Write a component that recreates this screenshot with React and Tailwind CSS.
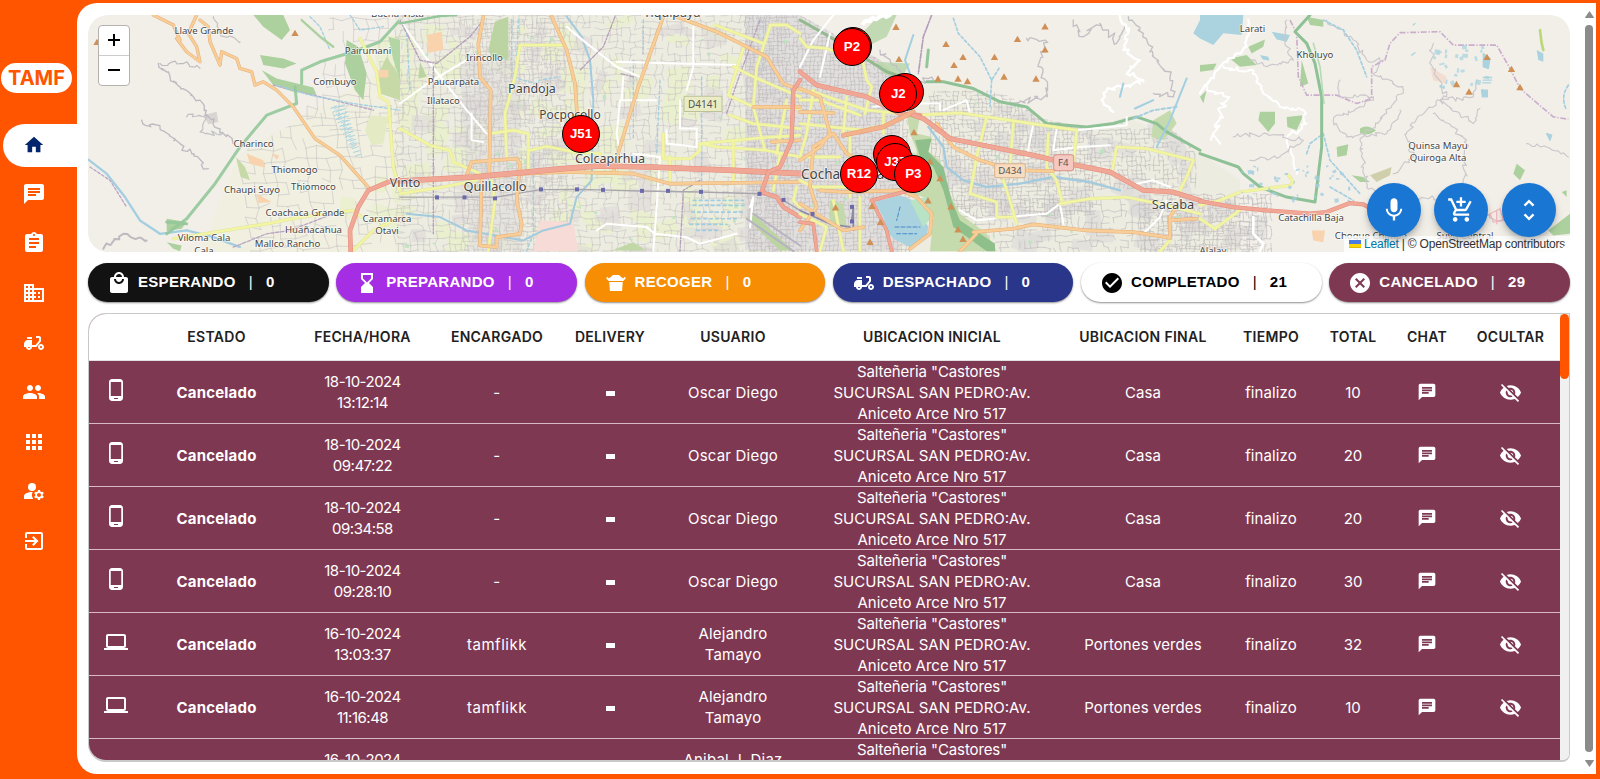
import {
  MdHome, MdChat, MdAssignment, MdBusiness, MdMoped, MdPeople, MdApps, MdManageAccounts,
  MdExitToApp, MdPhoneAndroid, MdComputer, MdLocalMall, MdHourglassBottom, MdTakeoutDining,
  MdCheckCircle, MdCancel, MdMic, MdAddShoppingCart, MdUnfoldMore, MdVisibilityOff,
} from "react-icons/md";

/* ---------- map drawing ---------- */

function rng(seed) {
  let s = seed;
  return () => {
    s = (s * 1664525 + 1013904223) % 4294967296;
    return s / 4294967296;
  };
}

// Jittered street mesh covering a rectangle, with some segments left out.
function mesh(x0, y0, x1, y1, step, keep, tilt, seed) {
  const r = rng(seed);
  const cols = Math.ceil((x1 - x0) / step);
  const rows = Math.ceil((y1 - y0) / step);
  const pts = [];
  for (let j = 0; j <= rows; j++) {
    const line = [];
    for (let i = 0; i <= cols; i++) {
      const jx = (r() - 0.5) * step * 0.5;
      const jy = (r() - 0.5) * step * 0.4;
      line.push([x0 + i * step + jx + tilt * j * step, y0 + j * step + jy - tilt * i * step * 0.4]);
    }
    pts.push(line);
  }
  let d = "";
  const seg = (a, b) => {
    d += `M${a[0].toFixed(1)} ${a[1].toFixed(1)}L${b[0].toFixed(1)} ${b[1].toFixed(1)}`;
  };
  for (let j = 0; j <= rows; j++)
    for (let i = 0; i <= cols; i++) {
      if (i < cols && r() < keep) seg(pts[j][i], pts[j][i + 1]);
      if (j < rows && r() < keep) seg(pts[j][i], pts[j + 1][i]);
    }
  return d;
}

function blobs(x0, y0, x1, y1, n, size, seed) {
  const r = rng(seed);
  return Array.from({ length: n }, () => ({
    x: x0 + r() * (x1 - x0),
    y: y0 + r() * (y1 - y0),
    w: size * (0.4 + r()),
    h: size * (0.4 + r()),
    a: r() * 50 - 25,
  }));
}

// Wandering thin line through the given anchor points.
function wiggle(points, amp, seed) {
  const r = rng(seed);
  let d = `M${points[0][0]} ${points[0][1]}`;
  for (let k = 1; k < points.length; k++) {
    const [ax, ay] = points[k - 1];
    const [bx, by] = points[k];
    const n = Math.max(2, Math.round(Math.hypot(bx - ax, by - ay) / 9));
    for (let i = 1; i <= n; i++) {
      const t = i / n;
      const q = i === n ? 0 : amp * 0.75;
      d += `L${(ax + (bx - ax) * t + (r() - 0.5) * q).toFixed(1)} ${(ay + (by - ay) * t + (r() - 0.5) * q).toFixed(1)}`;
    }
  }
  return d;
}

const VALLEY = "M330 15L400 15L800 15L880 60L905 85L960 84L1010 96L1040 118L1090 128L1130 116L1165 124L1200 152L1240 172L1290 200L1340 204L1370 215L1375 252L170 252L205 215L225 180L245 150L290 125L320 90Z";

const streets = [
  mesh(235, 118, 400, 270, 11, 0.62, 0.12, 3),
  mesh(300, 20, 400, 130, 11, 0.5, 0.05, 5),
];
const denseStreets = [
  mesh(395, 10, 780, 260, 6.5, 0.66, 0.01, 7),
  mesh(460, 20, 560, 260, 4.5, 0.6, 0.02, 17),
];
const cityStreets = [
  mesh(745, 10, 905, 255, 4, 0.78, 0.02, 11),
  mesh(930, 92, 1090, 215, 4, 0.72, 0.03, 13),
  mesh(1090, 130, 1190, 185, 4.5, 0.6, 0.04, 23),
  mesh(940, 200, 1260, 258, 6, 0.5, 0.02, 19),
  mesh(1140, 195, 1270, 255, 4.5, 0.7, 0.02, 29),
];

const fields = blobs(340, 20, 770, 250, 110, 20, 31);
const houses = blobs(400, 20, 900, 250, 80, 18, 41);
const eastHouses = blobs(935, 95, 1250, 245, 70, 20, 43);
const parks = blobs(400, 20, 1180, 245, 70, 3.5, 47);
const wet = blobs(1430, 45, 1490, 95, 26, 4, 53);
const rills = blobs(1240, 165, 1350, 200, 42, 3, 59);

const PEAKS = [
  [97, 42], [295, 33], [896, 27], [899, 59], [946, 44], [954, 65], [963, 57], [938, 78.5], [958, 78.5], [967.5, 81],
  [994.5, 57], [1004, 76.5], [1017.5, 39], [1045, 26.5], [1045, 49.5], [1036, 78.5], [914, 132], [930, 161], [940, 178], [928, 200],
  [951, 206], [958, 229], [963, 238.5], [872, 205.5], [880.5, 221.5], [835.5, 207], [870, 241.5], [1456.5, 84], [1469, 91.5],
  [1487, 57], [1511.5, 69], [1520, 87],
];

const STATIONS = [[437, 197], [464.5, 197], [495, 198], [541, 189], [577, 189], [603, 189.5], [642, 190.5], [668, 190.5], [701, 191.5], [759.5, 193.5], [783.5, 199.5], [812.5, 213.5], [852, 206.5], [852, 221]];

const PLACES = [
  ["Llave Grande", 204, 33.5, 9.6], ["Pairumani", 368, 53.5, 9.6], ["Combuyo", 335, 85, 9.6], ["Charinco", 253.5, 146.5, 9.6],
  ["Thiomogo", 294.5, 172.5, 9.6], ["Thiomoco", 313.5, 189.5, 9.6], ["Chaupi Suyo", 252, 193, 9.6], ["Coachaca Grande", 305, 216, 9.6],
  ["Huañacahua", 313.5, 233, 9.6], ["Mallco Rancho", 287.5, 247, 9.6], ["Viloma Cala", 204, 241, 9.6], ["Cala", 204, 253, 9.6],
  ["Bucha", 385, 17, 9.6], ["Caramarca", 387, 221.5, 9.6], ["Otavi", 387, 234, 9.6], ["Vinto", 405, 187, 12.5], ["Irincollo", 484.5, 61, 9.6],
  ["Paucarpata", 453.5, 85, 9.6], ["Illataco", 443.5, 103.5, 9.6], ["Vista", 413, 17, 9.6], ["Pandoja", 532, 93, 12.5], ["Pocpocollo", 570, 119, 12],
  ["Colcapirhua", 610, 163, 12.5], ["Quillacollo", 495, 191, 12.8], ["Tiquipaya", 672, 16.5, 12.5], ["Sacaba", 1173, 208.5, 12.8],
  ["Larati", 1252.5, 31.5, 9.6], ["Kholuyo", 1315, 57.5, 9.6], ["Quinsa Mayu", 1438, 148.5, 9.6], ["Quiroga Alta", 1438, 161, 9.6],
  ["Catachilla Baja", 1311, 221, 9.6], ["Choque Chimpa", 1371, 239, 9.6], ["Suyu Central", 1465, 239, 9.6], ["Alalay", 1213, 253, 9.6],
];

function Blobs({ items, fill, opacity }) {
  return items.map((b, i) => (
    <rect key={i} x={b.x} y={b.y} width={b.w} height={b.h} fill={fill} opacity={opacity} transform={`rotate(${b.a} ${b.x} ${b.y})`} />
  ));
}

// A road with a darker casing; coordinates are in thirds of a pixel.
function Road({ d, c, e, w }) {
  return (
    <>
      <path d={d} stroke={e} strokeWidth={w + 3} />
      <path d={d} stroke={c} strokeWidth={w} />
    </>
  );
}
const Yellow = ({ d, w = 7 }) => <Road d={d} c="#f2f5a2" e="#e3e4a0" w={w} />;
const Orange = ({ d, w = 8 }) => <Road d={d} c="#f8cd97" e="#e6b078" w={w} />;
const Red = ({ d, w = 14 }) => <Road d={d} c="#f0a795" e="#e68c7c" w={w} />;

function Map() {
  return (
    <svg viewBox="88 15 1482 236" preserveAspectRatio="none" className="block size-full" fill="none" strokeLinejoin="round" strokeLinecap="round">
      <rect x="88" y="15" width="1482" height="237" fill="#f2efe9" />
      <clipPath id="valley"><path d={VALLEY} /></clipPath>
      <g clipPath="url(#valley)">
        <path d="M395 15H790L905 85L960 84L1040 118L1130 118L1200 152L1240 180L1240 252H395Z" fill="#edece1" />
        <path d="M240 150L330 100L400 60V252H200Z" fill="#eff0dc" opacity="0.7" />
        <Blobs items={fields} fill="#e9f0cc" opacity={0.85} />
        <path d="M745 15H900V250H745Z" fill="#e1dfdd" />
        <path d="M460 60H520V250H470Z" fill="#e1dfdc" opacity="0.7" />
        <Blobs items={houses} fill="#dddbd9" opacity={0.6} />
        <Blobs items={eastHouses} fill="#dcdad8" opacity={0.6} />
        <path d={streets.join("")} stroke="#cac6c6" strokeWidth="0.65" />
        <path d={denseStreets.join("")} stroke="#c9c5c5" strokeWidth="0.6" />
        <path d={cityStreets.join("")} stroke="#c2bebe" strokeWidth="0.65" />
        <Blobs items={parks} fill="#b7e3bd" opacity={0.8} />
      </g>

      <g transform="scale(0.33333)">
        <path d="M760 45H850L870 90L845 120L790 80ZM780 165L850 175L890 190L850 205L790 195ZM1040 120L1075 140L1100 220L1090 300L1065 270L1035 190ZM785 210L830 235L940 262L950 285L880 275L820 255ZM500 655L560 665L545 685L500 692ZM500 725L545 735L540 752L520 745Z" fill="#add19e" />
        <path d="M708 470L735 500L750 540L722 530ZM1130 230L1160 170L1200 230V300L1140 280Z" fill="#c8d9a8" />
        <path d="M1165 110L1180 180L1200 240V120Z" fill="#b3d6a4" />
        <path d="M740 460L790 480L795 502L750 490ZM815 460L838 466L830 478ZM770 580L815 605L775 608ZM1135 210H1165V232H1135Z" fill="#f8d3ae" />
        <path d="M1110 345L1165 350L1150 430L1115 435L1095 390Z" fill="#e4ebc4" />
        <path d="M1010 320L1050 400M1000 320L1060 440M1025 315L1075 470" stroke="#a9d5e4" strokeWidth="20" strokeDasharray="3 9" strokeLinecap="butt" />
        <path d="M610 345L650 335L655 365L625 372Z" fill="#d8d5d3" />
        <path d={wiggle([[475, 190], [540, 260], [600, 300], [615, 345], [660, 385], [700, 430]], 22, 61)} stroke="#bdbbc0" strokeWidth="4" />
        <path d={wiggle([[425, 360], [480, 385], [540, 430], [625, 505]], 24, 62)} stroke="#bdbbc0" strokeWidth="4" />
        <path d={wiggle([[480, 190], [560, 185], [600, 205]], 18, 63)} stroke="#bdbbc0" strokeWidth="3.5" />
        <path d={wiggle([[560, 350], [620, 350], [600, 395], [670, 400]], 24, 64)} stroke="#c2c0c4" strokeWidth="3.5" />
        <path d={wiggle([[640, 50], [660, 100], [720, 125]], 20, 65)} stroke="#c2c0c4" strokeWidth="3.5" />
        <path d={wiggle([[310, 745], [370, 700], [440, 720]], 16, 66)} stroke="#bdbbc0" strokeWidth="6" />
        <path d="M265 478L320 520L375 590L420 660L480 700L560 690L640 710L720 740" stroke="#a3cfe0" strokeWidth="7" />
        <path d="M270 500L330 540L380 620M820 255L900 275L1000 300L1120 330" stroke="#b9a6c4" strokeWidth="4" strokeDasharray="8 6" />
        <path d="M830 255L930 285L1060 310L1200 330M930 50L960 80L990 150M1050 45L1080 90L1150 80" stroke="#a3cfe0" strokeWidth="4" strokeDasharray="9 6" />
        <path d="M500 700L560 655L645 550L720 440L800 345L890 310L885 260M905 250V210L960 185L1060 155L1140 125L1200 60M500 665L560 670" stroke="#93c69a" strokeWidth="9" opacity="0.9" />
        <path d="M905 60L960 110L1000 140" stroke="#add19e" strokeWidth="7" />
        <Orange d="M460 45L520 75L540 120L530 115L560 155L600 185L590 140L565 100L590 45M600 60L625 80L630 125L660 195L665 155L710 175L720 205L755 215L765 255L790 245L830 270L880 320L945 415L1020 465L1105 560" w={7} />
        <Yellow d="M1080 115L1130 215L1140 290L1165 305L1180 500L1200 570M520 715L800 670L900 650L1060 630L1085 650M1060 750L1120 690L1200 650" />
        <Red d="M1052 752L1050 690L1075 620L1105 570L1165 545L1200 540" w={11} />
        <path d="M700 740L800 700L870 690L1000 640" stroke="#b9a6c4" strokeWidth="4" strokeDasharray="10 5" />
      </g>

      <g transform="translate(400 0) scale(0.33333)">
        <path d="M285 65L325 50V180L275 170L265 150ZM60 185L80 230L55 235ZM1040 655L1060 640L1180 750H1140Z" fill="#bcd3a2" />
        <path d="M80 105L125 95L130 150L85 158Z" fill="#f8d3ae" />
        <path d="M420 660L520 665L535 752H400Z" fill="#f7dbd7" />
        <path d="M660 740L700 725L740 750H640Z" fill="#c1d8a6" />
        <path d="M880 615H1040M875 635H1035M875 655H1010M870 672H980M880 600H1030M890 690H960" stroke="#9fcde0" strokeWidth="5" strokeDasharray="8 10" />
        <path d="M500 50L545 110L570 180L580 300L575 540L530 590L510 670L430 690L370 720L200 690L120 650L20 640" stroke="#a3cbdd" strokeWidth="6" />
        <path d="M335 60V230L405 250L420 240L480 230M355 60L350 180M700 180V420M780 240L770 460M730 60V160M905 230V600M20 100L30 270M400 460V700L380 752M1090 60V220" stroke="#a3cfe0" strokeWidth="4" strokeDasharray="9 7" />
        <path d="M0 60L90 190L200 330L260 400M0 310L90 245L200 180M500 80L560 130L650 200L720 230M650 185L830 190L1010 195M880 80V200L860 270M670 230L665 300H770M660 300L650 400L660 460M215 340V420L250 425M590 690L620 670L740 680L765 700L860 710L900 730L1010 700M700 460L780 470L770 620L760 752M840 300V385H890V440L800 430V390M1050 620L1060 590L1050 680" stroke="#fff" strokeWidth="6" />
        <path d="M100 200L100 700M0 60L60 180L110 190L210 110L250 60M645 50L610 140L540 210M700 230L660 220M980 340L1010 250L1080 60M900 540L850 570L840 752" stroke="#b49fba" strokeWidth="4" strokeDasharray="12 5 4 5" />
        <path d="M0 70L120 48L170 45" stroke="#93c69a" strokeWidth="7" />
        <path d="M0 590H290L420 568L540 567L720 572L900 575L1080 580L1150 600L1200 630" stroke="#aaa6ad" strokeWidth="4" />
        <Yellow d="M490 135H360L345 230L315 340L320 470M0 385L90 435L150 450L160 485L240 520M0 580L120 562L230 540M290 530L385 510V400L340 390L270 400M390 450L440 438L520 455L600 460M275 540L285 600L265 752M945 75L1090 130M1110 75H1160L1200 100M1110 80L1070 200L1060 320L1095 450M1030 145L985 285L1060 320L1200 325M1000 200L1060 230L1200 290M900 430L1090 412L1200 405M790 400V475H870L900 450V430M905 430L950 440L1100 450L1200 470M1000 420V550M810 470V545M990 345L1060 370L1200 385M1140 460L1120 570M1190 560L1180 600L1200 620M1160 300L1130 460" />
        <Orange d="M250 50L235 130L240 230L272 270L268 520M455 50L500 150L525 250L535 400M790 50L715 260L660 440L640 515M830 50L950 95L1100 170L1150 250L1200 270M245 530L240 735L290 740V710L360 700L365 670L350 600L360 490L350 475L215 485L200 525M260 525L500 515L700 520L810 550L1200 545M1115 425L1200 420M1060 320H1200" />
        <Red d="M0 542L220 530L490 505L600 497L750 500L1000 510L1200 520" />
        <Red d="M1200 240L1180 270L1175 420L1140 500L1105 515L1085 575L1130 590L1150 620L1200 650" w={10} />
        <path d="M1040 655L1180 752M1060 640L1200 735" stroke="#b7b3c2" strokeWidth="6" />
        <rect x="852" y="288" width="114" height="46" rx="3" fill="#e9ecc4" stroke="#bcc19a" strokeWidth="3" />
        <text x="909" y="322" fill="#555" fontSize="30" textAnchor="middle" fontFamily="Noto Sans, sans-serif">D4141</text>
      </g>

      <g transform="translate(800 0) scale(0.33333)">
        <path d="M180 105L240 45H290L260 110L200 140ZM230 185L330 190L300 240L250 220Z" fill="#b5d5a6" opacity="0.8" />
        <path d="M320 345L360 350L350 400L395 410L380 450L420 480L450 580L480 640L560 700L590 752H390L400 650L370 590L340 580L350 450L330 400Z" fill="#c5dbae" />
        <path d="M345 420L395 415L385 455L430 500L455 600L480 660L585 730V752H560L460 680L430 570L400 500L360 470Z" fill="#8fbf8a" />
        <path d="M225 605L300 585L340 600L385 680L380 710L330 740L280 715L260 690L250 650Z" fill="#aad3df" />
        <path d="M330 600L380 590L395 650L370 680Z" fill="#b8e3c4" />
        <path d="M285 680H360M290 700H350M300 620L290 660" stroke="#4a88c8" strokeWidth="3" strokeDasharray="12 6" />
        <path d="M90 600L130 610L140 680L90 680Z" fill="#c3d9ab" />
        <path d="M1060 360L1110 330L1130 370L1090 420L1055 410Z" fill="#c5dbae" />
        <path d="M1180 100L1200 60V115Z" fill="#aad3df" />
        <path d={wiggle([[985, 50], [1030, 100], [1060, 170], [1110, 230], [1120, 290], [1060, 280]], 26, 71)} stroke="#c2c0c4" strokeWidth="4" />
        <path d={wiggle([[680, 115], [735, 120], [720, 200], [740, 290], [640, 310]], 30, 72)} stroke="#c2c0c4" strokeWidth="4" />
        <path d={wiggle([[240, 150], [300, 220], [350, 240], [400, 240]], 26, 73)} stroke="#c2c0c4" strokeWidth="4" />
        <path d={wiggle([[820, 60], [850, 110], [900, 70], [950, 130], [975, 80]], 30, 74)} stroke="#c2c0c4" strokeWidth="4" />
        <path d={wiggle([[960, 45], [985, 100], [970, 150], [1020, 180], [980, 220], [1030, 240], [990, 260], [920, 270], [905, 300], [940, 335]], 24, 75)} stroke="#fff" strokeWidth="7" />
        <path d={wiggle([[190, 70], [240, 50], [270, 45]], 14, 76)} stroke="#fff" strokeWidth="12" />
        <path d="M0 60L80 105L180 165L260 215L290 225" stroke="#93b98f" strokeWidth="9" />
        <path d="M380 245L430 245L520 265L600 305L680 320L740 370L860 380L940 370L1010 350L1070 370L1100 395L1200 450" stroke="#8fc196" strokeWidth="9" />
        <path d="M460 55L475 100L540 170L575 240L600 200M575 240L570 320" stroke="#a3cfe0" strokeWidth="5" strokeDasharray="8 7" />
        <path d="M340 105L315 180L330 220M1005 325L1060 300M1160 235L1110 360L1070 440M960 290L970 250" stroke="#a3cfe0" strokeWidth="6" />
        <path d="M1000 355L1060 330L1130 320" stroke="#a3cfe0" strokeWidth="6" strokeDasharray="10 8" />
        <path d="M385 380L430 440L440 500L490 540L560 560L660 550L760 530L870 545L960 570" stroke="#a3cbdd" strokeWidth="7" />
        <path d="M395 45L370 110L355 220" stroke="#b49fba" strokeWidth="5" strokeDasharray="16 5 4 5" />
        <path d="M385 150L380 200" stroke="#93c69a" strokeWidth="9" />
        <path d="M0 200L40 120L100 45M90 100L60 230M220 320L300 310H420V330M430 330L500 300L510 340M770 385L760 450L840 440L930 435M480 630L530 660L620 650L740 640L780 610M830 390L980 375V350M700 370L680 470M1010 550L1060 540L1110 560M1030 700L1080 650L1100 600M780 610L790 670" stroke="#fff" strokeWidth="6" />
        <path d="M160 620L155 660M0 630L90 670L150 680M160 620L160 690" stroke="#8f8ba6" strokeWidth="5" />
        <Yellow d="M0 115L20 140L80 145L120 160L190 190L200 240L215 260L195 340M0 270L40 275L200 330L350 345L480 338L560 350L830 390L820 500M560 350L530 470L510 580L590 605V650H640M640 370L630 500M610 540L630 600L650 670M745 400L740 500L770 540L785 600M780 610L870 595L980 590L1100 615L1200 640M950 440L935 520M950 440L1040 445L1180 480L1160 530L1140 570M0 300H60L180 345M40 270L20 400L0 470M140 290L130 400M0 370L190 390L230 380M150 400L150 590M250 340V400M20 470H120M0 540L40 560L200 560M0 640L80 680L60 752M100 600L120 700L130 752M180 590V752M1110 720L1080 752" />
        <Orange d="M0 265L60 290L90 400L60 440L0 480M0 335L100 338M100 400L140 460L180 480M100 400L40 440L30 560L50 620L0 690M60 570L130 575L300 570L350 590L395 640L390 700L330 745M410 370L460 440L540 480L640 510L760 512M520 695L640 685L700 672L860 690L1000 695L1110 712L1110 650L1130 620M1110 660L1190 655M480 752L530 700M0 610L130 690L190 680" />
        <Red d="M0 215L50 255L200 290L300 340L360 345" w={11} />
        <Road d="M130 405L250 380L340 335" c="#f4b28c" e="#e59a74" w={11} />
        <Red d="M340 345L370 355L450 415L700 465L830 495L930 515L1030 570L1120 575L1200 600" w={12} />
        <Red d="M330 570L215 600L260 690L275 752M0 665L40 670L50 752" w={8} />
        <rect x="584" y="490" width="92" height="42" rx="4" fill="#f8dcbf" stroke="#d9b18a" strokeWidth="3" />
        <text x="630" y="522" fill="#555" fontSize="29" textAnchor="middle" fontFamily="Noto Sans, sans-serif">D434</text>
        <rect x="761" y="463" width="60" height="48" rx="8" fill="#f5c9c1" stroke="#d6958b" strokeWidth="3" />
        <text x="790" y="497" fill="#555" fontSize="29" textAnchor="middle" fontFamily="Noto Sans, sans-serif">F4</text>
      </g>

      <g transform="translate(1200 0) scale(0.33333)">
        <path d="M0 45H130L125 105L70 100L40 135L0 115ZM215 95L270 105L260 125L230 118ZM1010 150L1030 160V185L1015 180ZM180 165L205 170L208 182L188 178Z" fill="#aad3df" />
        <path d="M145 140L195 118L190 140L155 160ZM90 175L140 165L170 195L120 200ZM0 195L50 190L40 210L0 215ZM180 335L225 335L225 370L205 395L175 360ZM260 350L310 345L290 390L262 380ZM410 440L445 432L440 465L412 470ZM480 385Q500 370 528 390Q510 408 480 400ZM0 290L20 270L10 310ZM320 50L370 60V80L330 75ZM950 490L975 510L960 540L940 520ZM1045 690L1110 640V700L1060 705ZM1100 570V590L1085 575ZM455 525L490 530L510 545L480 545Z" fill="#add19e" />
        <path d="M305 180L325 250L300 260Z" fill="#add19e" />
        <path d="M510 525L575 500L570 525L530 545Z" fill="#cfd0ab" />
        <path d="M690 200L740 230L735 250L700 240Z" fill="#f3dcd0" />
        <path d="M335 690L375 690L370 725L340 720Z" fill="#f8d3ae" />
        <path d="M850 232H875M850 240H875M848 248H872M850 160L870 175L865 205L850 200ZM845 270H862V290H847ZM1040 400L1055 405L1050 420ZM635 165L645 158M640 75L645 70" fill="#aad3df" stroke="#aad3df" strokeWidth="4" />
        <path d="M1020 90L1025 130L1030 150" stroke="#bcd77a" strokeWidth="8" />
        <path d={wiggle([[0, 280], [60, 200], [140, 140], [145, 60]], 14, 81)} stroke="#fff" strokeWidth="7" />
        <path d={wiggle([[70, 200], [160, 210], [190, 280], [240, 320], [310, 330], [320, 370], [260, 410], [280, 470], [290, 520]], 22, 82)} stroke="#fff" strokeWidth="6" />
        <path d={wiggle([[20, 260], [80, 290], [60, 350], [40, 400], [60, 430]], 34, 83)} stroke="#fff" strokeWidth="6" />
        <g stroke="#cbc8cc" strokeWidth="3.5">
          <path d={wiggle([[380, 60], [460, 120], [500, 180], [550, 180], [520, 220], [610, 270], [560, 340], [480, 420], [500, 560], [600, 590]], 22, 84)} />
          <path d={wiggle([[700, 130], [690, 190], [740, 290], [680, 330], [620, 400], [640, 470], [580, 520]], 22, 85)} />
          <path d={wiggle([[700, 340], [760, 380], [800, 420], [790, 600]], 22, 86)} />
          <path d={wiggle([[840, 325], [820, 370], [720, 300], [820, 290], [830, 240]], 20, 87)} />
          <path d={wiggle([[420, 240], [420, 290], [520, 290], [480, 320], [400, 360], [440, 410], [560, 400], [600, 330]], 20, 88)} />
          <path d={wiggle([[260, 60], [250, 110], [280, 180], [200, 200], [150, 180]], 18, 89)} />
          <path d={wiggle([[980, 430], [1040, 440], [1105, 470]], 14, 90)} />
          <path d={wiggle([[100, 410], [200, 400], [310, 420], [240, 470], [150, 480]], 20, 91)} />
          <path d={wiggle([[600, 600], [700, 590], [850, 640], [1000, 690]], 20, 92)} />
        </g>
        <path d="M270 60L290 100L295 230L320 285L410 285L470 310L515 295V200L555 180L570 130L600 98L720 95L760 135L890 135L930 205L960 265L1060 350L1105 357" stroke="#cbaecd" strokeWidth="5" strokeDasharray="18 5 4 5" strokeLinecap="butt" />
        <path d="M370 60L430 90L470 150L500 230M320 460L330 430L370 400L390 480L480 580M1105 255Q1080 290 1100 330M390 560L460 600" stroke="#a3cfe0" strokeWidth="5" strokeDasharray="9 7" />
        <path d="M330 45L285 95L320 130L345 190L365 290V440L345 605L260 590L180 560L130 520L115 500L0 460" stroke="#8fc196" strokeWidth="9" />
        <path d="M340 130L360 200L372 310" stroke="#b5dcb5" strokeWidth="5" />
        <Yellow d="M0 615L60 600L120 575L270 555L280 545L265 525M0 655L45 685L125 625" />
        <Red d="M0 602L100 620L200 630L330 640L380 635L450 608L490 612L540 640" w={10} />
        <path d="M180 752L190 730L160 700V650" stroke="#fff" strokeWidth="8" />
        <path d="M870 640L900 625L910 660L880 665ZM890 630V670" stroke="#f2b8c0" strokeWidth="4" />
      </g>
      <Blobs items={wet} fill="#aad3df" opacity={0.75} />
      <Blobs items={rills} fill="#9fcde0" opacity={0.8} />

      {PEAKS.map(([x, y], i) => (
        <path key={i} d={`M${x} ${y - 3.4}L${x + 3.7} ${y + 3}H${x - 3.7}Z`} fill="#d08f55" />
      ))}
      {STATIONS.map(([x, y], i) => (
        <rect key={i} x={x - 2} y={y - 2} width="4" height="4" fill="#6b6bab" />
      ))}
      <g fill="#454545" stroke="#ffffff" strokeOpacity="0.7" strokeWidth="1.6" paintOrder="stroke" textAnchor="middle" fontFamily="Noto Sans, sans-serif">
        {PLACES.map(([t, x, y, s], i) => (
          <text key={i} x={x} y={y} fontSize={s}>{t}</text>
        ))}
        <text x="801" y="178.5" fontSize="13.5" textAnchor="start">Cochabamba</text>
      </g>
    </svg>
  );
}

/* ---------- page ---------- */

const PINS = [
  ["", 765, 30.5], ["P2", 764, 31.5], ["", 817, 76.5], ["J2", 810.3, 79], ["", 803.5, 138.5], ["J37", 807.3, 147.3],
  ["R12", 771, 159], ["P3", 825.3, 159], ["J51", 493, 118.5],
];

const NAV = [MdChat, MdAssignment, MdBusiness, MdMoped, MdPeople, MdApps, MdManageAccounts, MdExitToApp];

const CHIPS = [
  [MdLocalMall, "ESPERANDO", 0, "bg-[#121212] text-white"],
  [MdHourglassBottom, "PREPARANDO", 0, "bg-[#a52de4] text-white"],
  [MdTakeoutDining, "RECOGER", 0, "bg-[#f68d02] text-white"],
  [MdMoped, "DESPACHADO", 0, "bg-[#293689] text-white"],
  [MdCheckCircle, "COMPLETADO", 21, "bg-white text-black"],
  [MdCancel, "CANCELADO", 29, "bg-[#7f3852] text-white"],
];

const GRID = "grid grid-cols-[54px_147px_145px_124px_102px_144px_254px_168px_88px_76px_72px_95px]";

const HEADS = ["", "ESTADO", "FECHA/HORA", "ENCARGADO", "DELIVERY", "USUARIO", "UBICACION INICIAL", "UBICACION FINAL", "TIEMPO", "TOTAL", "CHAT", "OCULTAR"];

const ROWS = [
  ["m", "18-10-2024", "13:12:14", "-", ["Oscar Diego"], "Casa", 10],
  ["m", "18-10-2024", "09:47:22", "-", ["Oscar Diego"], "Casa", 20],
  ["m", "18-10-2024", "09:34:58", "-", ["Oscar Diego"], "Casa", 20],
  ["m", "18-10-2024", "09:28:10", "-", ["Oscar Diego"], "Casa", 30],
  ["d", "16-10-2024", "13:03:37", "tamflikk", ["Alejandro", "Tamayo"], "Portones verdes", 32],
  ["d", "16-10-2024", "11:16:48", "tamflikk", ["Alejandro", "Tamayo"], "Portones verdes", 10],
  ["d", "16-10-2024", "", "", ["Anibal J. Diaz", ""], "", ""],
];

function Row({ row }) {
  const [device, date, time, agent, user, target, total] = row;
  const Device = device === "m" ? MdPhoneAndroid : MdComputer;
  return (
    <div className={`${GRID} h-[63px] shrink-0 items-center border-b border-[#d9b9c6] pb-px text-center leading-[21px]`}>
      <div className="flex justify-center pb-1"><Device className="size-6" /></div>
      <div className="font-bold tracking-[0.2px]">Cancelado</div>
      <div className="tracking-[-0.5px]">{date}<br />{time || "\u00a0"}</div>
      <div className="tracking-[0.5px]">{agent}</div>
      <div className="flex justify-center"><span className="mt-0.5 h-[5px] w-[9px] bg-white" /></div>
      <div className="tracking-[0.2px]">{user.map((u, i) => <div key={i}>{u || "\u00a0"}</div>)}</div>
      <div>
        <div className="tracking-[-0.1px]">Salteñeria "Castores"</div>
        <div>SUCURSAL SAN PEDRO:Av.</div>
        <div>Aniceto Arce Nro 517</div>
      </div>
      <div className="tracking-[0.1px]">{target}</div>
      <div className="tracking-[0.1px]">{total ? "finalizo" : ""}</div>
      <div>{total}</div>
      <div className="flex justify-center"><MdChat className="size-5" /></div>
      <div className="flex justify-center"><MdVisibilityOff className="size-[23px]" /></div>
    </div>
  );
}

export default function App() {
  return (
    <div className="flex h-[779px] w-[1600px] overflow-hidden bg-[#ff5500] pt-[3px] pr-1 pb-[5px] font-['Inter',sans-serif]">
      <aside className="flex w-[76.5px] shrink-0 flex-col">
        <div className="mt-[60px] ml-px flex h-[30px] w-[71px] items-center justify-center rounded-full bg-white text-[20px] font-bold text-[#ff5500]">TAMF</div>
        <div className="mt-[30.5px] ml-[3px] flex h-[43px] items-center rounded-l-full bg-white pl-5">
          <MdHome className="size-[22px] text-[#03256c]" />
        </div>
        <nav className="mt-[2.5px] flex flex-col text-white">
          {NAV.map((Icon, i) => (
            <div key={i} className="flex h-[49.6px] items-center pl-[22px]"><Icon className="size-6" /></div>
          ))}
        </nav>
      </aside>

      <div className="flex min-w-0 flex-1 rounded-l-[20px] bg-white">
        <main className="flex w-[1504px] flex-col pt-3 pl-[11.5px]">
          <section className="relative h-[236.5px] w-[1482px] overflow-hidden rounded-[20px]">
            <Map />
            {PINS.map(([label, x, y], i) => (
              <div key={i} className="absolute flex size-[38px] -translate-x-1/2 -translate-y-1/2 items-center justify-center rounded-full border border-black bg-[#fe0000] font-['Liberation_Sans',sans-serif] text-[13.3px] font-bold text-white" style={{ left: x, top: y }}>{label}</div>
            ))}
            <div className="absolute top-[9.5px] left-[10px] flex w-[32px] flex-col overflow-hidden rounded border border-[#b5b2ae] bg-white text-black">
              <span className="flex h-[30px] items-center justify-center border-b border-[#ccc]">
                <svg viewBox="0 0 12 12" className="size-3" stroke="currentColor" strokeWidth="2"><path d="M0 6H12M6 0V12" /></svg>
              </span>
              <span className="flex h-[29px] items-center justify-center">
                <svg viewBox="0 0 12 12" className="size-3" stroke="currentColor" strokeWidth="2"><path d="M0 6H12" /></svg>
              </span>
            </div>
            <div className="absolute right-0 bottom-0 flex h-[16px] w-[226px] items-center bg-white/80 pl-[5px] font-['Liberation_Sans',sans-serif] text-[12px] tracking-[-0.2px] whitespace-pre text-[#333]">
              <svg viewBox="0 0 12 8" className="mr-[3px] h-2 w-3 shrink-0"><path fill="#4C7BE1" d="M0 0h12v4H0z" /><path fill="#FFD500" d="M0 4h12v3H0z" /><path fill="#E0BC00" d="M0 7h12v1H0z" /></svg>
              <span className="text-[#0078a8]">Leaflet</span> | © OpenStreetMap contributors
            </div>
            <div className="absolute right-[14.5px] bottom-[14.5px] flex gap-[13.4px]">
              {[MdMic, MdAddShoppingCart, MdUnfoldMore].map((Icon, i) => (
                <span key={i} className="flex size-[54px] items-center justify-center rounded-full bg-[#1976d2] text-white shadow-[0_3px_5px_-1px_rgba(0,0,0,0.2),0_6px_10px_rgba(0,0,0,0.14)]"><Icon className="size-7" /></span>
              ))}
            </div>
          </section>

          <section className="mt-[11.5px] grid h-[39px] w-[1482px] grid-cols-6 gap-[7.6px] font-['Liberation_Sans',sans-serif]">
            {CHIPS.map(([Icon, label, count, tone]) => (
              <div key={label} className={`flex items-center rounded-full pl-[19px] text-[15px] font-bold tracking-[0.3px] shadow-[0_1px_2px_rgba(0,0,0,0.45)] ${tone}`}>
                <Icon className="mr-[7px] size-6" />
                <span>{label}</span>
                <span className="mx-[13px] font-normal">|</span>
                <span>{count}</span>
              </div>
            ))}
          </section>

          <section className="mt-[10.5px] flex h-[449px] w-[1482px] overflow-hidden rounded-l-[18px] rounded-br-lg border border-b-2 border-[#c9c9c9]">
            <div className="flex w-[1471px] flex-col overflow-hidden bg-[#7f3852] text-[15px] text-white">
              <div className={`${GRID} h-[47px] shrink-0 items-center border-b border-[#e0e0e0] bg-white pb-px text-center text-[14px] font-semibold tracking-[0.3px] text-[#212121]`}>
                {HEADS.map((h, i) => <div key={i} className="whitespace-nowrap">{h}</div>)}
              </div>
              {ROWS.map((row, i) => <Row key={i} row={row} />)}
            </div>
            <div className="w-[9px] bg-[#f0f0f0]">
              <div className="h-[65px] rounded-full bg-[#ff5500]" />
            </div>
          </section>
        </main>

        <div className="flex flex-1 flex-col items-center pt-2 pl-[2px]">
          <svg viewBox="0 0 9 7" className="h-[7px] w-[9px]"><path d="M4.5 0L9 6.5Q9 7 8.500 7H.5Q0 7 0 6.500Z" fill="#8b8b8b" /></svg>
          <div className="mt-[7px] h-[727px] w-2 rounded-full bg-[#8b8b8b]" />
          <svg viewBox="0 0 9 7" className="mt-2 h-[7px] w-[9px]"><path d="M4.500 7L9 .5Q9 0 8.500 0H.5Q0 0 0 .5Z" fill="#8b8b8b" /></svg>
        </div>
      </div>
    </div>
  );
}
